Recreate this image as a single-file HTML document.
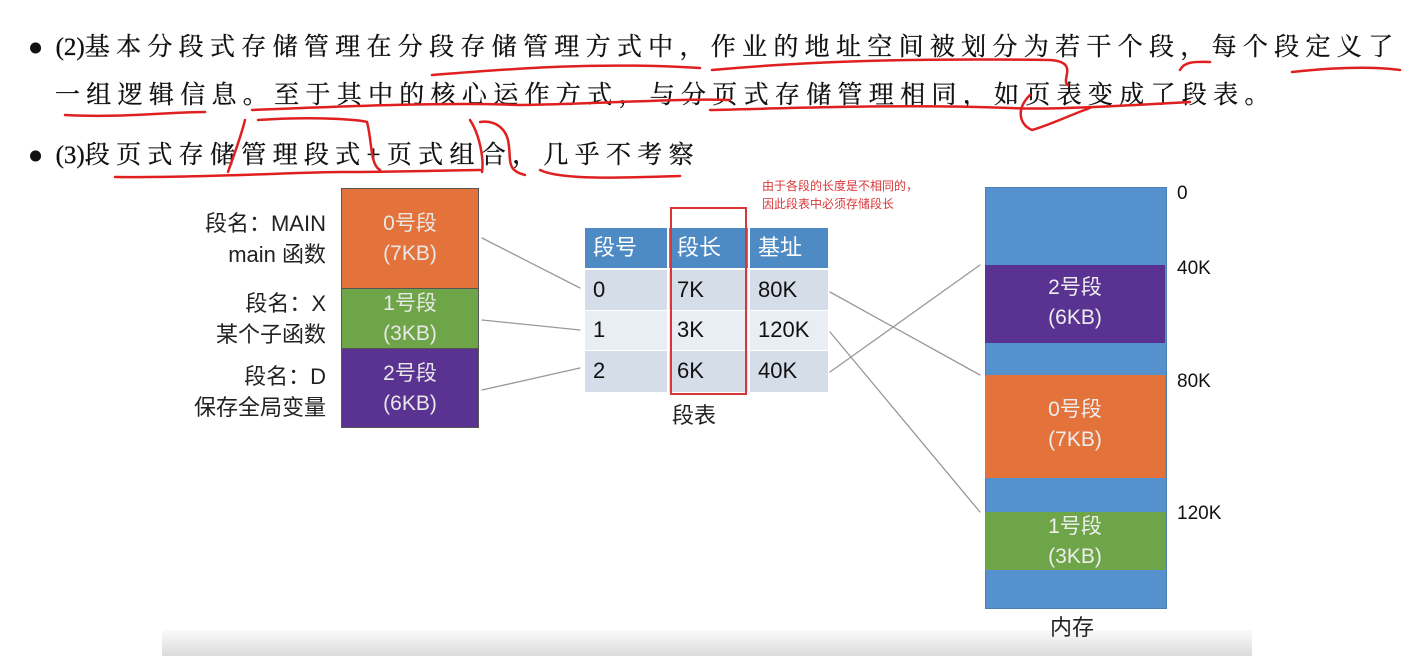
<!DOCTYPE html>
<html><head><meta charset="utf-8"><style>
body{margin:0;width:1421px;height:656px;background:#fff;position:relative;overflow:hidden;font-family:"Liberation Sans","Noto Sans CJK SC",sans-serif}
.t{position:absolute;font-family:"Liberation Serif","Noto Serif CJK SC",serif;font-size:25px;letter-spacing:6.3px;color:#111;white-space:nowrap;line-height:30px;-webkit-text-stroke:0.3px #111}
.t span{letter-spacing:0}
.a{position:absolute;white-space:nowrap;color:#222}
.blk{position:absolute;left:341px;width:138px;color:#e8e8e8;font-size:21px;text-align:center;line-height:30px;box-sizing:border-box;border:1px solid #555}
.cell{position:absolute;font-size:22px;color:#111;line-height:40px;padding-left:8px;box-sizing:border-box}
.m{position:absolute;left:985px;width:180px;color:#eee;font-size:21px;text-align:center;line-height:30px}
.lab{position:absolute;left:1177px;font-size:19px;color:#111}
</style></head><body>
<div class="t" style="left:28px;top:33px"><span>●&nbsp;&nbsp;(2)</span>基本分段式存储管理在分段存储管理方式中，作业的地址空间被划分为若干个段，每个段定义了</div>
<div class="t" style="left:55px;top:81px">一组逻辑信息。至于其中的核心运作方式，与分页式存储管理相同，如页表变成了段表。</div>
<div class="t" style="left:28px;top:141px"><span>●&nbsp;&nbsp;(3)</span>段页式存储管理段式+页式组合，几乎不考察</div>

<div class="a" style="left:190px;top:208px;font-size:22px;width:136px;text-align:right;line-height:31px">段名：MAIN<br>main 函数</div>
<div class="a" style="left:190px;top:288px;font-size:22px;width:136px;text-align:right;line-height:31px">段名：X<br>某个子函数</div>
<div class="a" style="left:150px;top:361px;font-size:22px;width:176px;text-align:right;line-height:31px">段名：D<br>保存全局变量</div>

<div class="blk" style="top:188px;height:101px;background:#e3733b;padding-top:20px">0号段<br>(7KB)</div>
<div class="blk" style="top:288px;height:61px;background:#6ea548;padding-top:0px">1号段<br>(3KB)</div>
<div class="blk" style="top:348px;height:80px;background:#5a3291;padding-top:10px">2号段<br>(6KB)</div>

<div style="position:absolute;left:585px;top:228px;width:243px;height:40px;background:#4e8ac4"></div>
<div style="position:absolute;left:585px;top:270px;width:243px;height:40px;background:#d4dde8"></div>
<div style="position:absolute;left:585px;top:311px;width:243px;height:39px;background:#e9eef4"></div>
<div style="position:absolute;left:585px;top:351px;width:243px;height:41px;background:#d4dde8"></div>
<div style="position:absolute;left:667px;top:228px;width:2px;height:164px;background:#fff"></div>
<div style="position:absolute;left:748px;top:228px;width:2px;height:164px;background:#fff"></div>
<div class="cell" style="left:585px;top:228px;color:#fff">段号</div>
<div class="cell" style="left:669px;top:228px;color:#fff">段长</div>
<div class="cell" style="left:750px;top:228px;color:#fff">基址</div>
<div class="cell" style="left:585px;top:270px">0</div><div class="cell" style="left:669px;top:270px">7K</div><div class="cell" style="left:750px;top:270px">80K</div>
<div class="cell" style="left:585px;top:310px">1</div><div class="cell" style="left:669px;top:310px">3K</div><div class="cell" style="left:750px;top:310px">120K</div>
<div class="cell" style="left:585px;top:351px">2</div><div class="cell" style="left:669px;top:351px">6K</div><div class="cell" style="left:750px;top:351px">40K</div>
<div style="position:absolute;left:670px;top:207px;width:77px;height:188px;border:2px solid #d9363a;box-sizing:border-box"></div>
<div class="a" style="left:672px;top:398px;font-size:22px">段表</div>
<div class="a" style="left:762px;top:177px;font-size:12px;color:#d9363a;line-height:18px">由于各段的长度是不相同的，<br>因此段表中必须存储段长</div>

<div class="m" style="top:187px;height:420px;background:#5591cc;border:1px solid #4a7fb3"></div>
<div class="m" style="top:265px;height:78px;background:#5a3291;padding-top:8px;box-sizing:border-box">2号段<br>(6KB)</div>
<div class="m" style="top:375px;height:103px;background:#e3733b;padding-top:20px;box-sizing:border-box">0号段<br>(7KB)</div>
<div class="m" style="top:512px;height:58px;background:#6ea548;box-sizing:border-box">1号段<br>(3KB)</div>
<div class="lab" style="top:183px">0</div>
<div class="lab" style="top:258px">40K</div>
<div class="lab" style="top:371px">80K</div>
<div class="lab" style="top:503px">120K</div>

<div style="position:absolute;left:162px;top:630px;width:1090px;height:26px;background:linear-gradient(#fafafa,#dcdcdc)"></div>
<div class="a" style="left:1050px;top:610px;font-size:22px">内存</div>

<svg style="position:absolute;left:0;top:0" width="1421" height="656" fill="none" stroke-linecap="round">
<g stroke="#999" stroke-width="1.3">
<line x1="482" y1="238" x2="580" y2="288"/><line x1="482" y1="320" x2="580" y2="330"/><line x1="482" y1="390" x2="580" y2="368"/>
<line x1="830" y1="292" x2="980" y2="375"/><line x1="830" y1="332" x2="980" y2="512"/><line x1="830" y1="372" x2="980" y2="265"/>
</g>
<g stroke="#e02020" stroke-width="2.5">
<path d="M432 75 C520 68 600 62 700 68"/>
<path d="M712 70 C800 62 900 58 1050 60 C1080 62 1060 80 1068 85"/>
<path d="M1180 70 C1185 60 1200 62 1210 62"/>
<path d="M1292 72 C1330 68 1370 66 1400 70"/>
<path d="M65 115 C120 118 170 112 205 112"/>
<path d="M252 110 C350 106 450 102 520 105 C600 104 680 98 730 100"/>
<path d="M710 110 C800 108 900 104 1010 108 C1050 110 1120 106 1190 102"/>
<path d="M1030 95 C1015 110 1020 125 1032 130 C1050 125 1070 115 1090 108"/>
<path d="M258 120 C320 116 360 120 367 122 C372 140 370 165 380 170"/>
<path d="M245 120 C240 140 232 160 228 172"/>
<path d="M470 120 C480 135 484 160 482 172"/>
<path d="M480 122 C495 120 505 128 508 140 C512 160 505 170 525 175"/>
<path d="M115 177 C200 178 300 172 340 172 C400 172 460 170 480 170"/>
<path d="M540 170 C560 180 620 178 680 176"/>
</g>
</svg>
</body></html>
